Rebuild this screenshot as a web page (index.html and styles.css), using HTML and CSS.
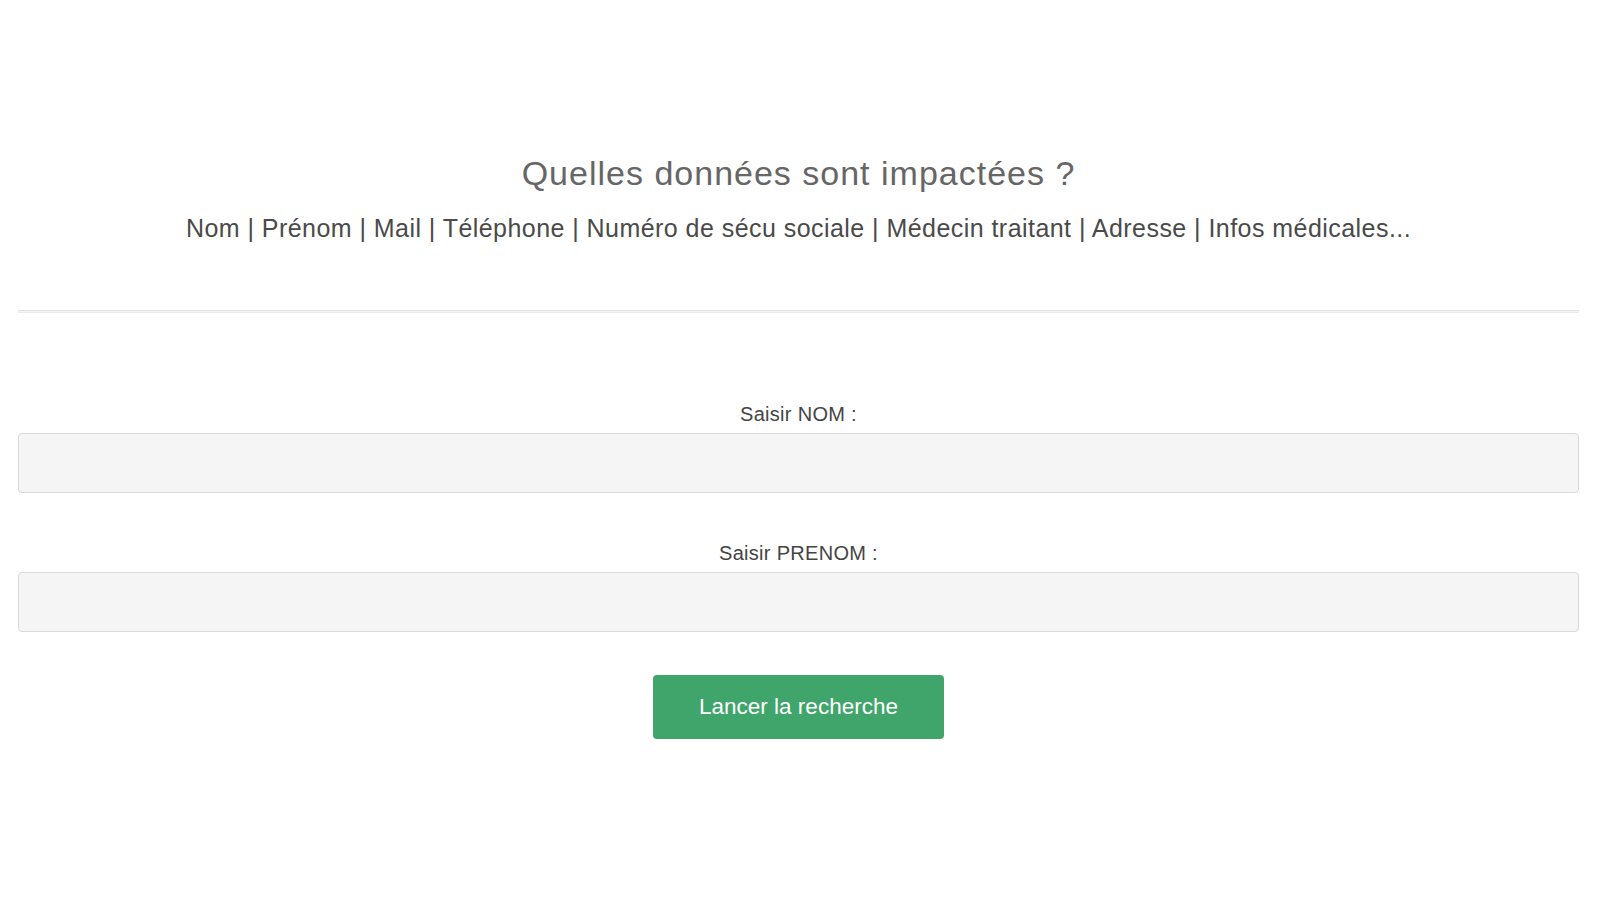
FILE: index.html
```html
<!DOCTYPE html>
<html lang="fr">
<head>
    <meta charset="UTF-8">
    <meta name="viewport" content="width=device-width, initial-scale=1.0">
    <title>Quelles données sont impactées ?</title>
    <link rel="stylesheet" href="styles.css">
</head>
<body>
    <div class="container">
        <div class="intro">
            <h1>Quelles données sont impactées ?</h1>
            <p class="fields">Nom | Prénom | Mail | Téléphone | Numéro de sécu sociale | Médecin traitant | Adresse | Infos médicales...</p>
        </div>
        <hr class="divider">
        <form id="searchForm" class="search">
            <label for="nom">Saisir NOM :</label>
            <input type="text" id="nom" name="nom">

            <label for="prenom">Saisir PRENOM :</label>
            <input type="text" id="prenom" name="prenom">

            <button type="submit">Lancer la recherche</button>
        </form>
    </div>
</body>
</html>
```

FILE: styles.css
```css
body {
    font-family: "Liberation Sans", Arial, sans-serif;
    background-color: #fff;
    color: #444;
    margin: 0;
    padding: 0;
}
.container {
    padding: 153px 21px 0 18px;
}
.intro {
    text-align: center;
}
h1 {
    margin: 0;
    font-size: 34px;
    line-height: 40px;
    font-weight: normal;
    letter-spacing: 1px;
    color: #666;
}
.fields {
    margin: 20px 0 0;
    font-size: 25px;
    line-height: 30px;
    letter-spacing: 0.45px;
    color: #4a4a4a;
}
.divider {
    margin: 67px 0 0;
    height: 1px;
    border: none;
    border-top: 1px solid #e2e2e2;
    border-bottom: 1px solid #ebebeb;
    background: #f3f3f3;
}
.search {
    display: flex;
    flex-direction: column;
    align-items: center;
    padding-top: 89px;
}
label {
    font-size: 20px;
    line-height: 24px;
    letter-spacing: 0.3px;
    color: #444;
    margin-bottom: 7px;
}
input {
    box-sizing: border-box;
    width: 100%;
    height: 60px;
    margin: 0 0 48px;
    padding: 0 12px;
    font-size: 18px;
    background: #f5f5f5;
    border: 1px solid #d9d9d9;
    border-radius: 4px;
}
input:last-of-type {
    margin-bottom: 43px;
}
button {
    height: 64px;
    padding: 0 46px;
    font-family: inherit;
    font-size: 22.5px;
    color: #fff;
    background-color: #40a56a;
    border: none;
    border-radius: 4px;
    cursor: pointer;
}
button:hover {
    background-color: #37925c;
}
```
